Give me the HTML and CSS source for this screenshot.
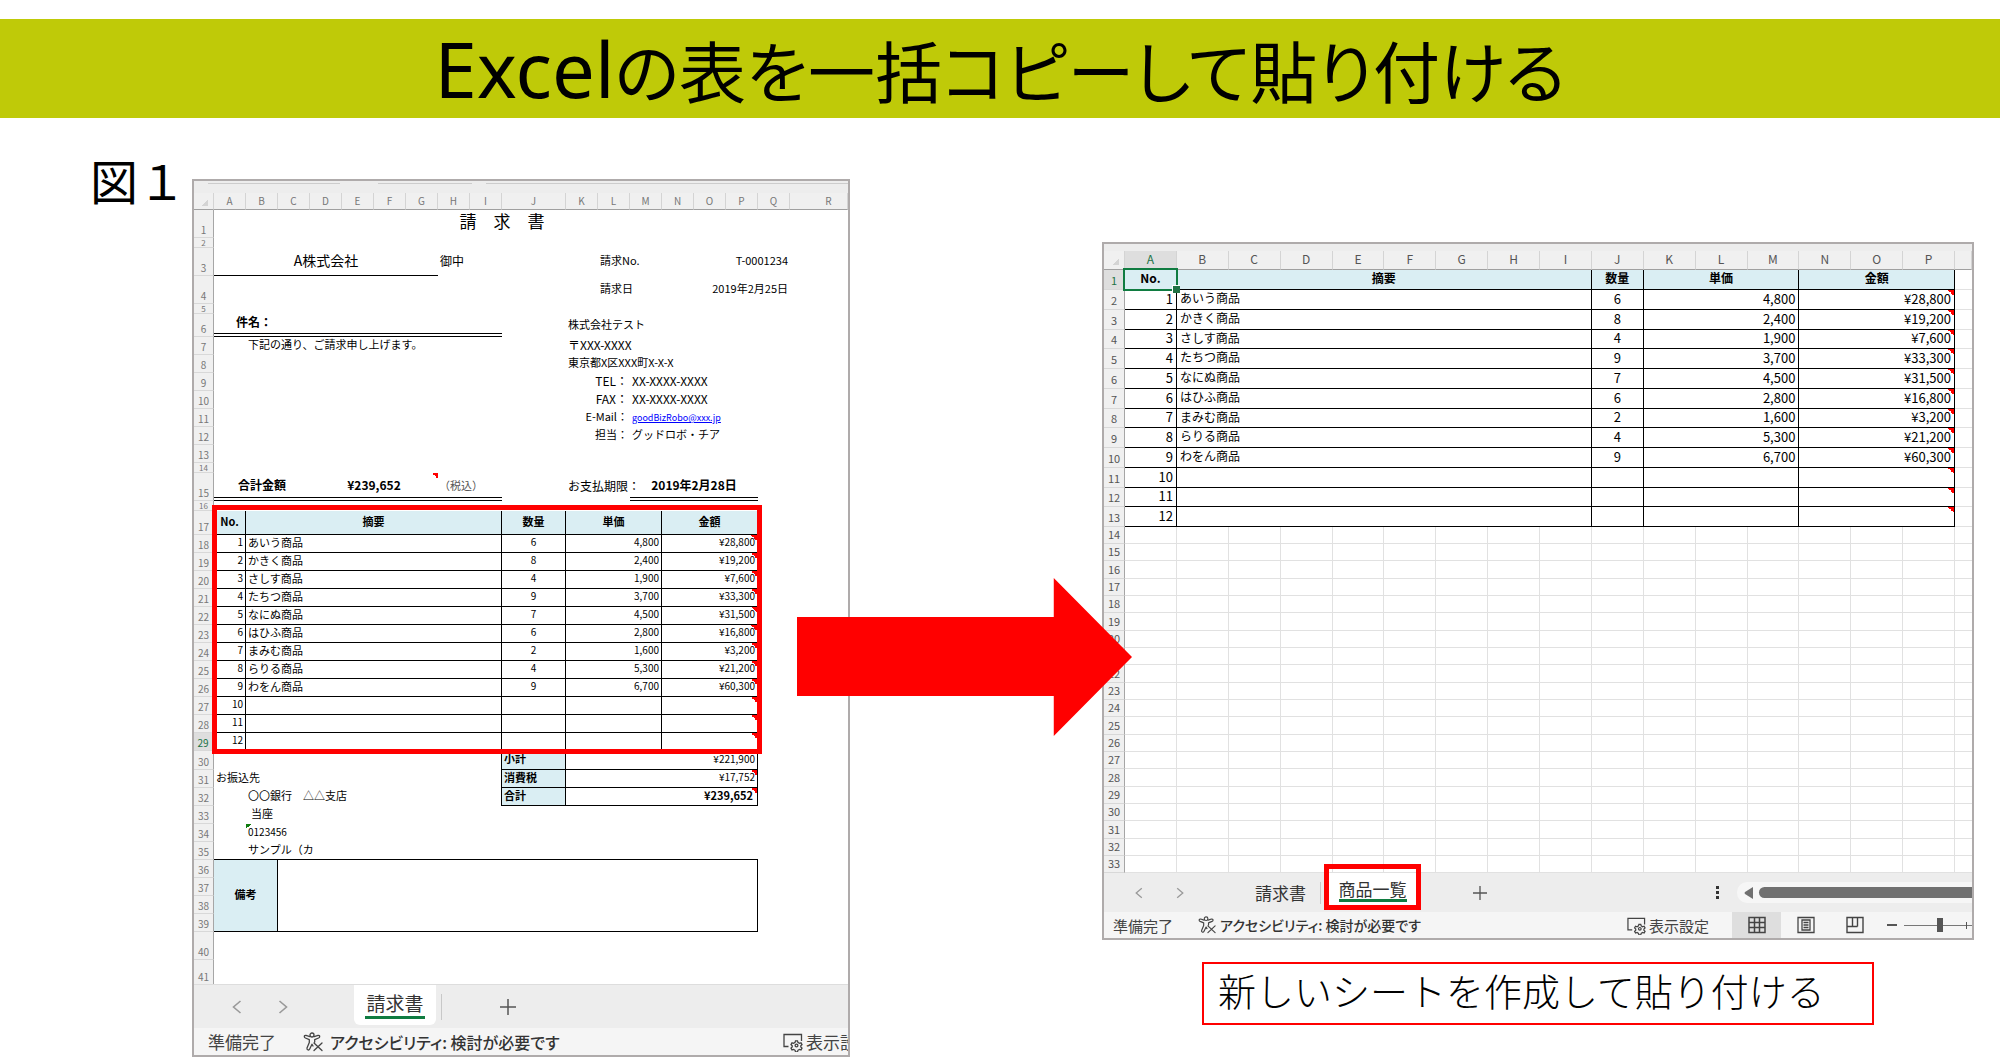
FILE: index.html
```html
<!DOCTYPE html>
<html lang="ja">
<head>
<meta charset="utf-8">
<title>Excelの表を一括コピーして貼り付ける</title>
<link rel="stylesheet" href="styles.css">
</head>
<body>
<svg class="defs" aria-hidden="true">
  <symbol id="access" viewBox="0 0 20 20"><g fill="none" stroke="#444" stroke-width="1.3" stroke-linejoin="round" stroke-linecap="round"><circle cx="9" cy="3" r="2"/><path d="M6.8 4.6 3 3.4Q1.400 3.200 1.300 4.600 1.300 5.500 2.400 6L6.300 7.600V10.500L4 16Q3.600 17.600 5 18 6.200 18.200 6.700 17L9 12.300 10 14M11.200 4.600 15 3.400Q16.600 3.200 16.700 4.600 16.700 5.500 15.600 6L11.700 7.600V10M11 11l8 7.500M19 11l-8 7.500"/></g></symbol>
  <symbol id="display" viewBox="0 0 20 20"><g fill="none" stroke="#444" stroke-width="1.300"><path d="M5.500 14.500H1V2.500H18.500V9"/><circle cx="13.500" cy="13.500" r="1.400"/><path d="M12.500 8.800h2l.4 1.600 1.500.9 1.600-.5 1 1.800-1.200 1.100v1.300l1.200 1.100-1 1.800-1.600-.5-1.500.9-.4 1.500h-2l-.4-1.500-1.500-.9-1.600.5-1-1.800 1.200-1.100v-1.300L8 12.600l1-1.800 1.600.5 1.500-.9z"/></g></symbol>
  <symbol id="prev" viewBox="0 0 10 14"><path d="M8.500 1 1.500 7l7 6" fill="none" stroke="#999" stroke-width="1.600"/></symbol>
  <symbol id="next" viewBox="0 0 10 14"><path d="M1.500 1l7 6-7 6" fill="none" stroke="#999" stroke-width="1.600"/></symbol>
  <symbol id="plus" viewBox="0 0 16 16"><path d="M8 0v16M0 8h16" stroke="#555" stroke-width="1.500"/></symbol>
</svg>
<header class="banner"><h1><span class="latin">Excel</span>の表を一括コピーして貼り付ける</h1></header>
<main class="slide">
  <p class="fig-label">図１</p>

  <section class="window invoice">
    <div class="strip"></div>
    <table class="sheet">
      <colgroup><col class="c-row"><col span="9" class="c"><col class="c-j"><col span="7" class="c"><col></colgroup>
      <thead><tr class="cols"><th class="corner"></th><th>A</th><th>B</th><th>C</th><th>D</th><th>E</th><th>F</th><th>G</th><th>H</th><th>I</th><th>J</th><th>K</th><th>L</th><th>M</th><th>N</th><th>O</th><th>P</th><th>Q</th><th class="wide">R</th></tr></thead>
      <tbody>
      <tr class="h28"><th>1</th><td colspan="17" class="title">請　求　書</td><td></td></tr>
      <tr class="h10"><th>2</th><td colspan="18"></td></tr>
      <tr class="h28"><th>3</th><td colspan="7" class="client">A株式会社</td><td colspan="4" class="honor">御中</td><td colspan="3">請求No.</td><td colspan="3" class="r">T-0001234</td><td></td></tr>
      <tr class="h28"><th>4</th><td colspan="11"></td><td colspan="3">請求日</td><td colspan="3" class="r">2019年2月25日</td><td></td></tr>
      <tr class="h10"><th>5</th><td colspan="18"></td></tr>
      <tr class="h23"><th>6</th><td colspan="9" class="subject">件名：</td><td></td><td colspan="8">株式会社テスト</td></tr>
      <tr><th>7</th><td></td><td colspan="9">下記の通り、ご請求申し上げます。</td><td colspan="8" class="contact">〒XXX-XXXX</td></tr>
      <tr><th>8</th><td colspan="10"></td><td colspan="8">東京都X区XXX町X-X-X</td></tr>
      <tr class="contact"><th>9</th><td colspan="10"></td><td colspan="2" class="r">TEL：</td><td colspan="6">XX-XXXX-XXXX</td></tr>
      <tr class="contact"><th>10</th><td colspan="10"></td><td colspan="2" class="r">FAX：</td><td colspan="6">XX-XXXX-XXXX</td></tr>
      <tr><th>11</th><td colspan="10"></td><td colspan="2" class="r">E-Mail：</td><td colspan="6"><a href="mailto:goodBizRobo@xxx.jp">goodBizRobo@xxx.jp</a></td></tr>
      <tr><th>12</th><td colspan="10"></td><td colspan="2" class="r">担当：</td><td colspan="6">グッドロボ・チア</td></tr>
      <tr><th>13</th><td colspan="18"></td></tr>
      <tr class="h10"><th>14</th><td colspan="18"></td></tr>
      <tr class="h28"><th>15</th><td colspan="3" class="sum dbl">合計金額</td><td colspan="4" class="sum dbl note">¥239,652</td><td colspan="2" class="dbl tax">（税込）</td><td></td><td colspan="2" class="r due">お支払期限：</td><td colspan="4" class="sum dbl">2019年2月28日</td><td colspan="2"></td></tr>
      <tr class="h10"><th>16</th><td colspan="18"></td></tr>
      <tr class="h24 items head"><th>17</th><td>No.</td><td colspan="8">摘要</td><td>数量</td><td colspan="3">単価</td><td colspan="3">金額</td></tr>
      <tr class="items"><th>18</th><td>1</td><td colspan="8">あいう商品</td><td>6</td><td colspan="3">4,800</td><td colspan="3">¥28,800</td></tr>
      <tr class="items"><th>19</th><td>2</td><td colspan="8">かきく商品</td><td>8</td><td colspan="3">2,400</td><td colspan="3">¥19,200</td></tr>
      <tr class="items"><th>20</th><td>3</td><td colspan="8">さしす商品</td><td>4</td><td colspan="3">1,900</td><td colspan="3">¥7,600</td></tr>
      <tr class="items"><th>21</th><td>4</td><td colspan="8">たちつ商品</td><td>9</td><td colspan="3">3,700</td><td colspan="3">¥33,300</td></tr>
      <tr class="items"><th>22</th><td>5</td><td colspan="8">なにぬ商品</td><td>7</td><td colspan="3">4,500</td><td colspan="3">¥31,500</td></tr>
      <tr class="items"><th>23</th><td>6</td><td colspan="8">はひふ商品</td><td>6</td><td colspan="3">2,800</td><td colspan="3">¥16,800</td></tr>
      <tr class="items"><th>24</th><td>7</td><td colspan="8">まみむ商品</td><td>2</td><td colspan="3">1,600</td><td colspan="3">¥3,200</td></tr>
      <tr class="items"><th>25</th><td>8</td><td colspan="8">らりる商品</td><td>4</td><td colspan="3">5,300</td><td colspan="3">¥21,200</td></tr>
      <tr class="items"><th>26</th><td>9</td><td colspan="8">わをん商品</td><td>9</td><td colspan="3">6,700</td><td colspan="3">¥60,300</td></tr>
      <tr class="items"><th>27</th><td>10</td><td colspan="8"></td><td></td><td colspan="3"></td><td colspan="3"></td></tr>
      <tr class="items"><th>28</th><td>11</td><td colspan="8"></td><td></td><td colspan="3"></td><td colspan="3"></td></tr>
      <tr class="items"><th class="active">29</th><td>12</td><td colspan="8"></td><td></td><td colspan="3"></td><td colspan="3"></td></tr>
      <tr class="h19"><th>30</th><td colspan="9" class="edge"></td><td class="lbl">小計</td><td colspan="6" class="val">¥221,900</td><td colspan="2"></td></tr>
      <tr><th>31</th><td colspan="9" class="edge">お振込先</td><td class="lbl">消費税</td><td colspan="6" class="val note">¥17,752</td><td colspan="2"></td></tr>
      <tr><th>32</th><td></td><td colspan="8" class="edge">〇〇銀行　△△支店</td><td class="lbl">合計</td><td colspan="6" class="val note grand">¥239,652</td><td colspan="2"></td></tr>
      <tr><th>33</th><td></td><td colspan="17" class="indent">当座</td></tr>
      <tr><th>34</th><td></td><td colspan="17" class="warn">0123456</td></tr>
      <tr><th>35</th><td class="under"></td><td colspan="15" class="under">サンプル（カ</td><td colspan="2"></td></tr>
      <tr><th>36</th><td colspan="2" rowspan="4" class="memo">備考</td><td colspan="14" rowspan="4" class="box"></td><td colspan="2"></td></tr>
      <tr><th>37</th><td colspan="2"></td></tr>
      <tr><th>38</th><td colspan="2"></td></tr>
      <tr><th>39</th><td colspan="2"></td></tr>
      <tr class="h28"><th>40</th><td colspan="18"></td></tr>
      <tr class="h24"><th class="last">41</th><td colspan="18"></td></tr>
      </tbody>
    </table>
    <nav class="tabs">
      <button class="nav-btn" aria-label="前のシート"><svg width="10" height="14"><use href="#prev"/></svg></button>
      <button class="nav-btn" aria-label="次のシート"><svg width="10" height="14"><use href="#next"/></svg></button>
      <button class="tab current"><span>請求書</span></button>
      <i class="sep"></i>
      <button class="nav-btn add" aria-label="新しいシート"><svg width="16" height="16"><use href="#plus"/></svg></button>
    </nav>
    <footer class="status">
      <span>準備完了</span>
      <button class="access"><svg width="20" height="20"><use href="#access"/></svg>アクセシビリティ: 検討が必要です</button>
      <button class="display"><svg width="20" height="20"><use href="#display"/></svg>表示設定</button>
    </footer>
    <div class="marker"></div>
  </section>

  <svg class="arrow" viewBox="0 0 334 158" preserveAspectRatio="none" aria-hidden="true"><path d="M0 39H256V0L334 79L256 158V118H0Z" fill="#f00"/></svg>

  <div class="result">
    <section class="window list">
      <div class="strip"></div>
      <table class="sheet">
        <colgroup><col class="c-row"><col span="16"><col class="c-end"></colgroup>
        <thead><tr class="cols"><th class="corner"></th><th class="active">A</th><th>B</th><th>C</th><th>D</th><th>E</th><th>F</th><th>G</th><th>H</th><th>I</th><th>J</th><th>K</th><th>L</th><th>M</th><th>N</th><th>O</th><th>P</th><th></th></tr></thead>
        <tbody class="data">
        <tr class="items head"><th class="active">1</th><td class="cursor">No.</td><td colspan="8">摘要</td><td>数量</td><td colspan="3">単価</td><td colspan="3">金額</td><td></td></tr>
        <tr class="items"><th>2</th><td>1</td><td colspan="8">あいう商品</td><td>6</td><td colspan="3">4,800</td><td colspan="3">¥28,800</td><td></td></tr>
        <tr class="items"><th>3</th><td>2</td><td colspan="8">かきく商品</td><td>8</td><td colspan="3">2,400</td><td colspan="3">¥19,200</td><td></td></tr>
        <tr class="items"><th>4</th><td>3</td><td colspan="8">さしす商品</td><td>4</td><td colspan="3">1,900</td><td colspan="3">¥7,600</td><td></td></tr>
        <tr class="items"><th>5</th><td>4</td><td colspan="8">たちつ商品</td><td>9</td><td colspan="3">3,700</td><td colspan="3">¥33,300</td><td></td></tr>
        <tr class="items"><th>6</th><td>5</td><td colspan="8">なにぬ商品</td><td>7</td><td colspan="3">4,500</td><td colspan="3">¥31,500</td><td></td></tr>
        <tr class="items"><th>7</th><td>6</td><td colspan="8">はひふ商品</td><td>6</td><td colspan="3">2,800</td><td colspan="3">¥16,800</td><td></td></tr>
        <tr class="items"><th>8</th><td>7</td><td colspan="8">まみむ商品</td><td>2</td><td colspan="3">1,600</td><td colspan="3">¥3,200</td><td></td></tr>
        <tr class="items"><th>9</th><td>8</td><td colspan="8">らりる商品</td><td>4</td><td colspan="3">5,300</td><td colspan="3">¥21,200</td><td></td></tr>
        <tr class="items"><th>10</th><td>9</td><td colspan="8">わをん商品</td><td>9</td><td colspan="3">6,700</td><td colspan="3">¥60,300</td><td></td></tr>
        <tr class="items"><th>11</th><td>10</td><td colspan="8"></td><td></td><td colspan="3"></td><td colspan="3"></td><td></td></tr>
        <tr class="items"><th>12</th><td>11</td><td colspan="8"></td><td></td><td colspan="3"></td><td colspan="3"></td><td></td></tr>
        <tr class="items"><th>13</th><td>12</td><td colspan="8"></td><td></td><td colspan="3"></td><td colspan="3"></td><td></td></tr>
        </tbody>
        <tbody class="blank">
        <tr><th>14<td><td><td><td><td><td><td><td><td><td><td><td><td><td><td><td><td>
        <tr><th>15<td><td><td><td><td><td><td><td><td><td><td><td><td><td><td><td><td>
        <tr><th>16<td><td><td><td><td><td><td><td><td><td><td><td><td><td><td><td><td>
        <tr><th>17<td><td><td><td><td><td><td><td><td><td><td><td><td><td><td><td><td>
        <tr><th>18<td><td><td><td><td><td><td><td><td><td><td><td><td><td><td><td><td>
        <tr><th>19<td><td><td><td><td><td><td><td><td><td><td><td><td><td><td><td><td>
        <tr><th>20<td><td><td><td><td><td><td><td><td><td><td><td><td><td><td><td><td>
        <tr><th>21<td><td><td><td><td><td><td><td><td><td><td><td><td><td><td><td><td>
        <tr><th>22<td><td><td><td><td><td><td><td><td><td><td><td><td><td><td><td><td>
        <tr><th>23<td><td><td><td><td><td><td><td><td><td><td><td><td><td><td><td><td>
        <tr><th>24<td><td><td><td><td><td><td><td><td><td><td><td><td><td><td><td><td>
        <tr><th>25<td><td><td><td><td><td><td><td><td><td><td><td><td><td><td><td><td>
        <tr><th>26<td><td><td><td><td><td><td><td><td><td><td><td><td><td><td><td><td>
        <tr><th>27<td><td><td><td><td><td><td><td><td><td><td><td><td><td><td><td><td>
        <tr><th>28<td><td><td><td><td><td><td><td><td><td><td><td><td><td><td><td><td>
        <tr><th>29<td><td><td><td><td><td><td><td><td><td><td><td><td><td><td><td><td>
        <tr><th>30<td><td><td><td><td><td><td><td><td><td><td><td><td><td><td><td><td>
        <tr><th>31<td><td><td><td><td><td><td><td><td><td><td><td><td><td><td><td><td>
        <tr><th>32<td><td><td><td><td><td><td><td><td><td><td><td><td><td><td><td><td>
        <tr><th>33<td><td><td><td><td><td><td><td><td><td><td><td><td><td><td><td><td>
        </tbody>
      </table>
      <nav class="tabs">
        <button class="nav-btn" aria-label="前のシート"><svg width="8" height="12"><use href="#prev"/></svg></button>
        <button class="nav-btn" aria-label="次のシート"><svg width="8" height="12"><use href="#next"/></svg></button>
        <button class="tab">請求書</button>
        <i class="sep"></i>
        <button class="tab current"><span>商品一覧</span></button>
        <button class="nav-btn add" aria-label="新しいシート"><svg width="14" height="14"><use href="#plus"/></svg></button>
        <span class="grip"></span>
        <div class="scroll"><svg width="9" height="12" viewBox="0 0 9 12"><path d="M9 0v12L1 7Q0 6 1 5z" fill="#707070"/></svg><i></i></div>
      </nav>
      <footer class="status">
        <span>準備完了</span>
        <button class="access"><svg width="18" height="18"><use href="#access"/></svg>アクセシビリティ: 検討が必要です</button>
        <button class="display"><svg width="19" height="19"><use href="#display"/></svg>表示設定</button>
        <button class="view on" aria-label="標準"><svg width="18" height="18" viewBox="0 0 18 18"><path d="M1 1.500h16v15H1zM1 6.500h16M1 11.500h16M6.500 1.500v15M11.500 1.500v15" fill="none" stroke="#444" stroke-width="1.500"/></svg></button>
        <button class="view" aria-label="ページ レイアウト"><svg width="18" height="18" viewBox="0 0 18 18"><path d="M1 1.500h16v15H1zM5 4h8v10H5zM6.500 6.500h5M6.500 9h5M6.500 11.500h5" fill="none" stroke="#444" stroke-width="1.300"/></svg></button>
        <button class="view" aria-label="改ページ プレビュー"><svg width="18" height="18" viewBox="0 0 18 18"><path d="M1 1.500h16v15H1zM6.500 1.500v9M11.500 1.500v9M1 10.500h10.500" fill="none" stroke="#444" stroke-width="1.400"/></svg></button>
        <button class="minus" aria-label="縮小"></button>
        <input class="zoom" type="range" aria-label="ズーム" min="0" max="100" value="53">
      </footer>
    </section>
    <p class="caption">新しいシートを作成して貼り付ける</p>
  </div>
</main>
</body>
</html>
```

FILE: styles.css
```css
* { box-sizing: border-box; }
body { margin: 0; background: #fff; color: #000; font-family: "Noto Sans CJK JP", sans-serif; }
button { border: 0; padding: 0; background: none; color: inherit; font: inherit; display: flex; align-items: center; white-space: nowrap; }
.defs { display: none; }

.banner { margin-top: 19px; height: 99px; background: #bfca08; display: flex; justify-content: center; align-items: center; }
.banner h1 { margin: 0; font-weight: 400; font-size: 67px; line-height: 99px; font-feature-settings: "palt"; white-space: nowrap; }
.banner .latin { font-family: "Noto Sans", sans-serif; font-size: 76px; line-height: 1; }

.slide { display: grid; grid-template-columns: 192px minmax(0, 658fr) 252px minmax(0, 872fr) 26px; align-items: start; }
.fig-label { margin: 26px 0 0 90px; font-size: 48px; line-height: 70px; white-space: nowrap; }
.window { position: relative; border: 2px solid #afabab; background: #fff; overflow: hidden; }
.invoice { margin-top: 61px; }
.result { margin-top: 124px; }
.arrow { grid-column: 3; margin: 460px -30px 0 -53px; width: 335px; height: 158px; z-index: 1; }

/* worksheet */
.sheet { width: 100%; table-layout: fixed; border-collapse: separate; border-spacing: 0; }
.sheet td { padding: 0 2px 3px; white-space: nowrap; vertical-align: middle; line-height: 1; }
.sheet th { padding: 0 0 3px; font-weight: 400; text-align: center; vertical-align: bottom; line-height: 1; color: #777; background: #f0f0f0; border-right: 1px solid #a6a6a6; border-bottom: 1px solid #d8d8d8; }
.sheet .cols th { padding-bottom: 2px; border-right-color: #d4d4d4; border-bottom-color: #a0a0a0; vertical-align: middle; }
.sheet .corner { background: linear-gradient(135deg, transparent 65%, #d4d4d4 65%) 50% 60% / 9px 9px no-repeat #f0f0f0; }
.strip { background: #ededed; }
.items td { border-right: 1px solid #000; border-bottom: 1px solid #000; text-align: right; }
.items td:nth-child(3) { text-align: left; }
.items td:nth-child(4) { text-align: center; }
.items td:nth-child(6), .note { background: linear-gradient(45deg, transparent 50%, #f00 50%) 100% 0 / 6px 6px no-repeat; }
.items.head td { background: #daeef3; text-align: center; font-weight: 700; }

.invoice .strip { height: 12px; background: linear-gradient(#ccc, #ccc) 14px 2px / 132px 1px no-repeat, linear-gradient(#ccc, #ccc) 184px 2px / 94px 1px no-repeat, linear-gradient(#ccc, #ccc) 292px 2px / 100% 1px no-repeat, #ededed; }
.invoice .sheet { font-size: 11px; }
.invoice .sheet th { font-size: 10px; line-height: 9px; }
.invoice .c-row { width: 20px; }
.invoice .c { width: 32px; }
.invoice .c-j { width: 64px; }
.invoice tr { height: 18px; }
.invoice .cols { height: 17px; }
.invoice .cols .wide { padding-left: 20px; }
.invoice .h10 { height: 10px; }
.invoice .h10 th { padding: 0; font-size: 8px; line-height: 8px; }
.invoice .h10 td { padding: 0; }
.invoice .h19 { height: 19px; }
.invoice .h23 { height: 23px; }
.invoice .h24 { height: 24px; }
.invoice .h28 { height: 28px; }
.invoice .title { padding-bottom: 8px; font-size: 17px; text-align: center; }
.invoice .client { font-size: 14px; text-align: center; border-bottom: 1px solid #000; }
.invoice .honor { font-size: 12px; }
.invoice .r { text-align: right; }
.invoice .contact { font-size: 12px; }
.invoice .due { font-size: 12px; padding-right: 5px; }
.invoice a { color: #00f; font-size: 9px; }
.invoice .subject { padding-left: 22px; font-size: 12px; font-weight: 700; border-bottom: 4px double #000; }
.invoice .sum { padding-bottom: 0; font-size: 12px; font-weight: 700; text-align: center; }
.invoice .dbl { border-bottom: 4px double #000; }
.invoice .tax { padding: 0 0 0 1px; color: #555; }
.invoice .items td { font-size: 10px; }
.invoice .items td:nth-child(3), .invoice .items.head td { font-size: 11px; }
.invoice .active { background: #dedede; color: #217346; border-right: 2px solid #217346; }
.invoice .last { border-bottom: 0; }
.invoice .edge { border-right: 1px solid #000; }
.invoice .lbl { background: #daeef3; font-weight: 700; border-right: 1px solid #000; border-bottom: 1px solid #000; }
.invoice .val { font-size: 10px; text-align: right; border-right: 1px solid #000; border-bottom: 1px solid #000; }
.invoice .grand { font-size: 11px; font-weight: 700; padding-right: 4px; }
.invoice .indent { padding-left: 5px; }
.invoice .warn { font-size: 10px; background: linear-gradient(135deg, #107c10 50%, transparent 50%) 0 0 / 5px 5px no-repeat; }
.invoice .under { border-bottom: 1px solid #000; }
.invoice .memo { background: #daeef3; font-weight: 700; text-align: center; border-right: 1px solid #000; border-bottom: 1px solid #000; }
.invoice .box { border-right: 1px solid #000; border-bottom: 1px solid #000; }
.marker { position: absolute; left: 18px; top: 324px; width: 550px; height: 249px; border: 5px solid #f00; }

.list .strip { height: 7px; }
.list .sheet { font-size: 13px; }
.list .sheet th { font-size: 11px; line-height: 12px; color: #555; }
.list .cols th { font-size: 12px; }
.list .c-row { width: 21px; }
.list .c-end { width: 17px; }
.list .cols { height: 19px; }
.list .data tr { height: 20px; }
.list .data tr:nth-child(4n) { height: 19px; }
.list .blank tr { height: 17px; }
.list .blank tr:nth-child(3n) { height: 18px; }
.list .blank td { border-right: 1px solid #e1e1e1; border-bottom: 1px solid #e1e1e1; padding: 0; }
.list .sheet td:last-child { border-right: 0; }
.list .items td { padding: 0 3px 3px; }
.list .items td:nth-child(3), .list .items.head td { font-size: 12px; }
.list .items td:last-child { background: none; border-bottom-color: #e1e1e1; }
.list .sheet .active { color: #217346; background: #dedede; }
.list .cursor { position: relative; }
.list .cursor::before { content: ""; position: absolute; inset: -2px -2px -2px -2px; border: 2px solid #107c41; }
.list .cursor::after { content: ""; position: absolute; right: -4px; bottom: -4px; width: 7px; height: 7px; background: #217346; border: 1px solid #fff; border-width: 1px 0 0 1px; }

/* sheet tabs and status bar */
.tabs { display: flex; align-items: center; background: #ededed; color: #333; }
.status { display: flex; align-items: center; background: #f5f5f5; color: #444; line-height: 1; white-space: nowrap; }
.access { font-weight: 500; font-feature-settings: "palt"; color: #333; }
.sep { width: 1px; height: 26px; background: #c8c8c8; }
.tab { line-height: 1; justify-content: center; }
.tab span { border-bottom: 3px solid #107c41; }
.current { background: #fff; }
.nav-btn { flex: none; }

.invoice .tabs { height: 44px; padding-left: 38px; border-top: 1px solid #ddd; }
.invoice .nav-btn + .nav-btn { margin-left: 36px; }
.invoice .tab { margin-left: 66px; width: 82px; height: 40px; align-self: flex-start; border-radius: 0 0 6px 6px; font-size: 19px; }
.invoice .tab span { padding: 2px 1px 4px; }
.invoice .sep { margin-left: 5px; }
.invoice .add { margin-left: 58px; }
.invoice .status { height: 27px; padding-left: 14px; font-size: 17px; }
.invoice .access { margin-left: 27px; gap: 7px; font-size: 16px; }
.invoice .display { margin-left: auto; margin-right: -26px; gap: 3px; }

.list .tabs { height: 39px; padding-left: 31px; }
.list .nav-btn + .nav-btn { margin-left: 33px; }
.list .tab { margin-left: 71px; font-size: 17px; }
.list .sep { margin-left: 14px; height: 22px; }
.list .sep + .tab { position: relative; margin-left: 3px; width: 97px; height: 36px; align-self: flex-start; }
.list .tab span { padding-bottom: 2px; }
.list .sep + .tab::after { content: ""; position: absolute; inset: -9px 0 -1px 0; border: 5px solid #f00; }
.list .tabs { position: relative; }
.list .add { margin-left: 52px; }
.grip { margin-left: auto; width: 3px; height: 13px; background: linear-gradient(#333 3px, transparent 3px) 0 0 / 3px 5px; }
.scroll { margin-left: 18px; width: 235px; height: 21px; padding-left: 7px; display: flex; align-items: center; gap: 6px; background: #f6f6f6; border-radius: 10px 0 0 10px; }
.scroll i { flex: 1; height: 11px; background: #707070; border-radius: 6px 0 0 6px; }
.list .status { height: 26px; padding-left: 9px; font-size: 15px; }
.list .access { margin-left: 25px; gap: 4px; font-size: 14px; }
.list .display { margin-left: auto; margin-right: 23px; gap: 3px; }
.view { width: 49px; height: 26px; justify-content: center; }
.view.on { background: #dedede; }
.minus { margin-left: 8px; width: 10px; height: 2px; background: #555; }
.zoom { appearance: none; margin: 0 0 0 7px; width: 68px; height: 16px; background: linear-gradient(#555, #555) 62px 50% / 1px 7px no-repeat, linear-gradient(#777, #777) 0 50% / 100% 1px no-repeat; }
.zoom::-webkit-slider-thumb { appearance: none; width: 6px; height: 14px; background: #555; }

.caption { margin: 22px 100px 0 100px; height: 63px; border: 2px solid #f00; padding: 0 14px; font-size: 38px; font-weight: 300; line-height: 52px; white-space: nowrap; }
```
